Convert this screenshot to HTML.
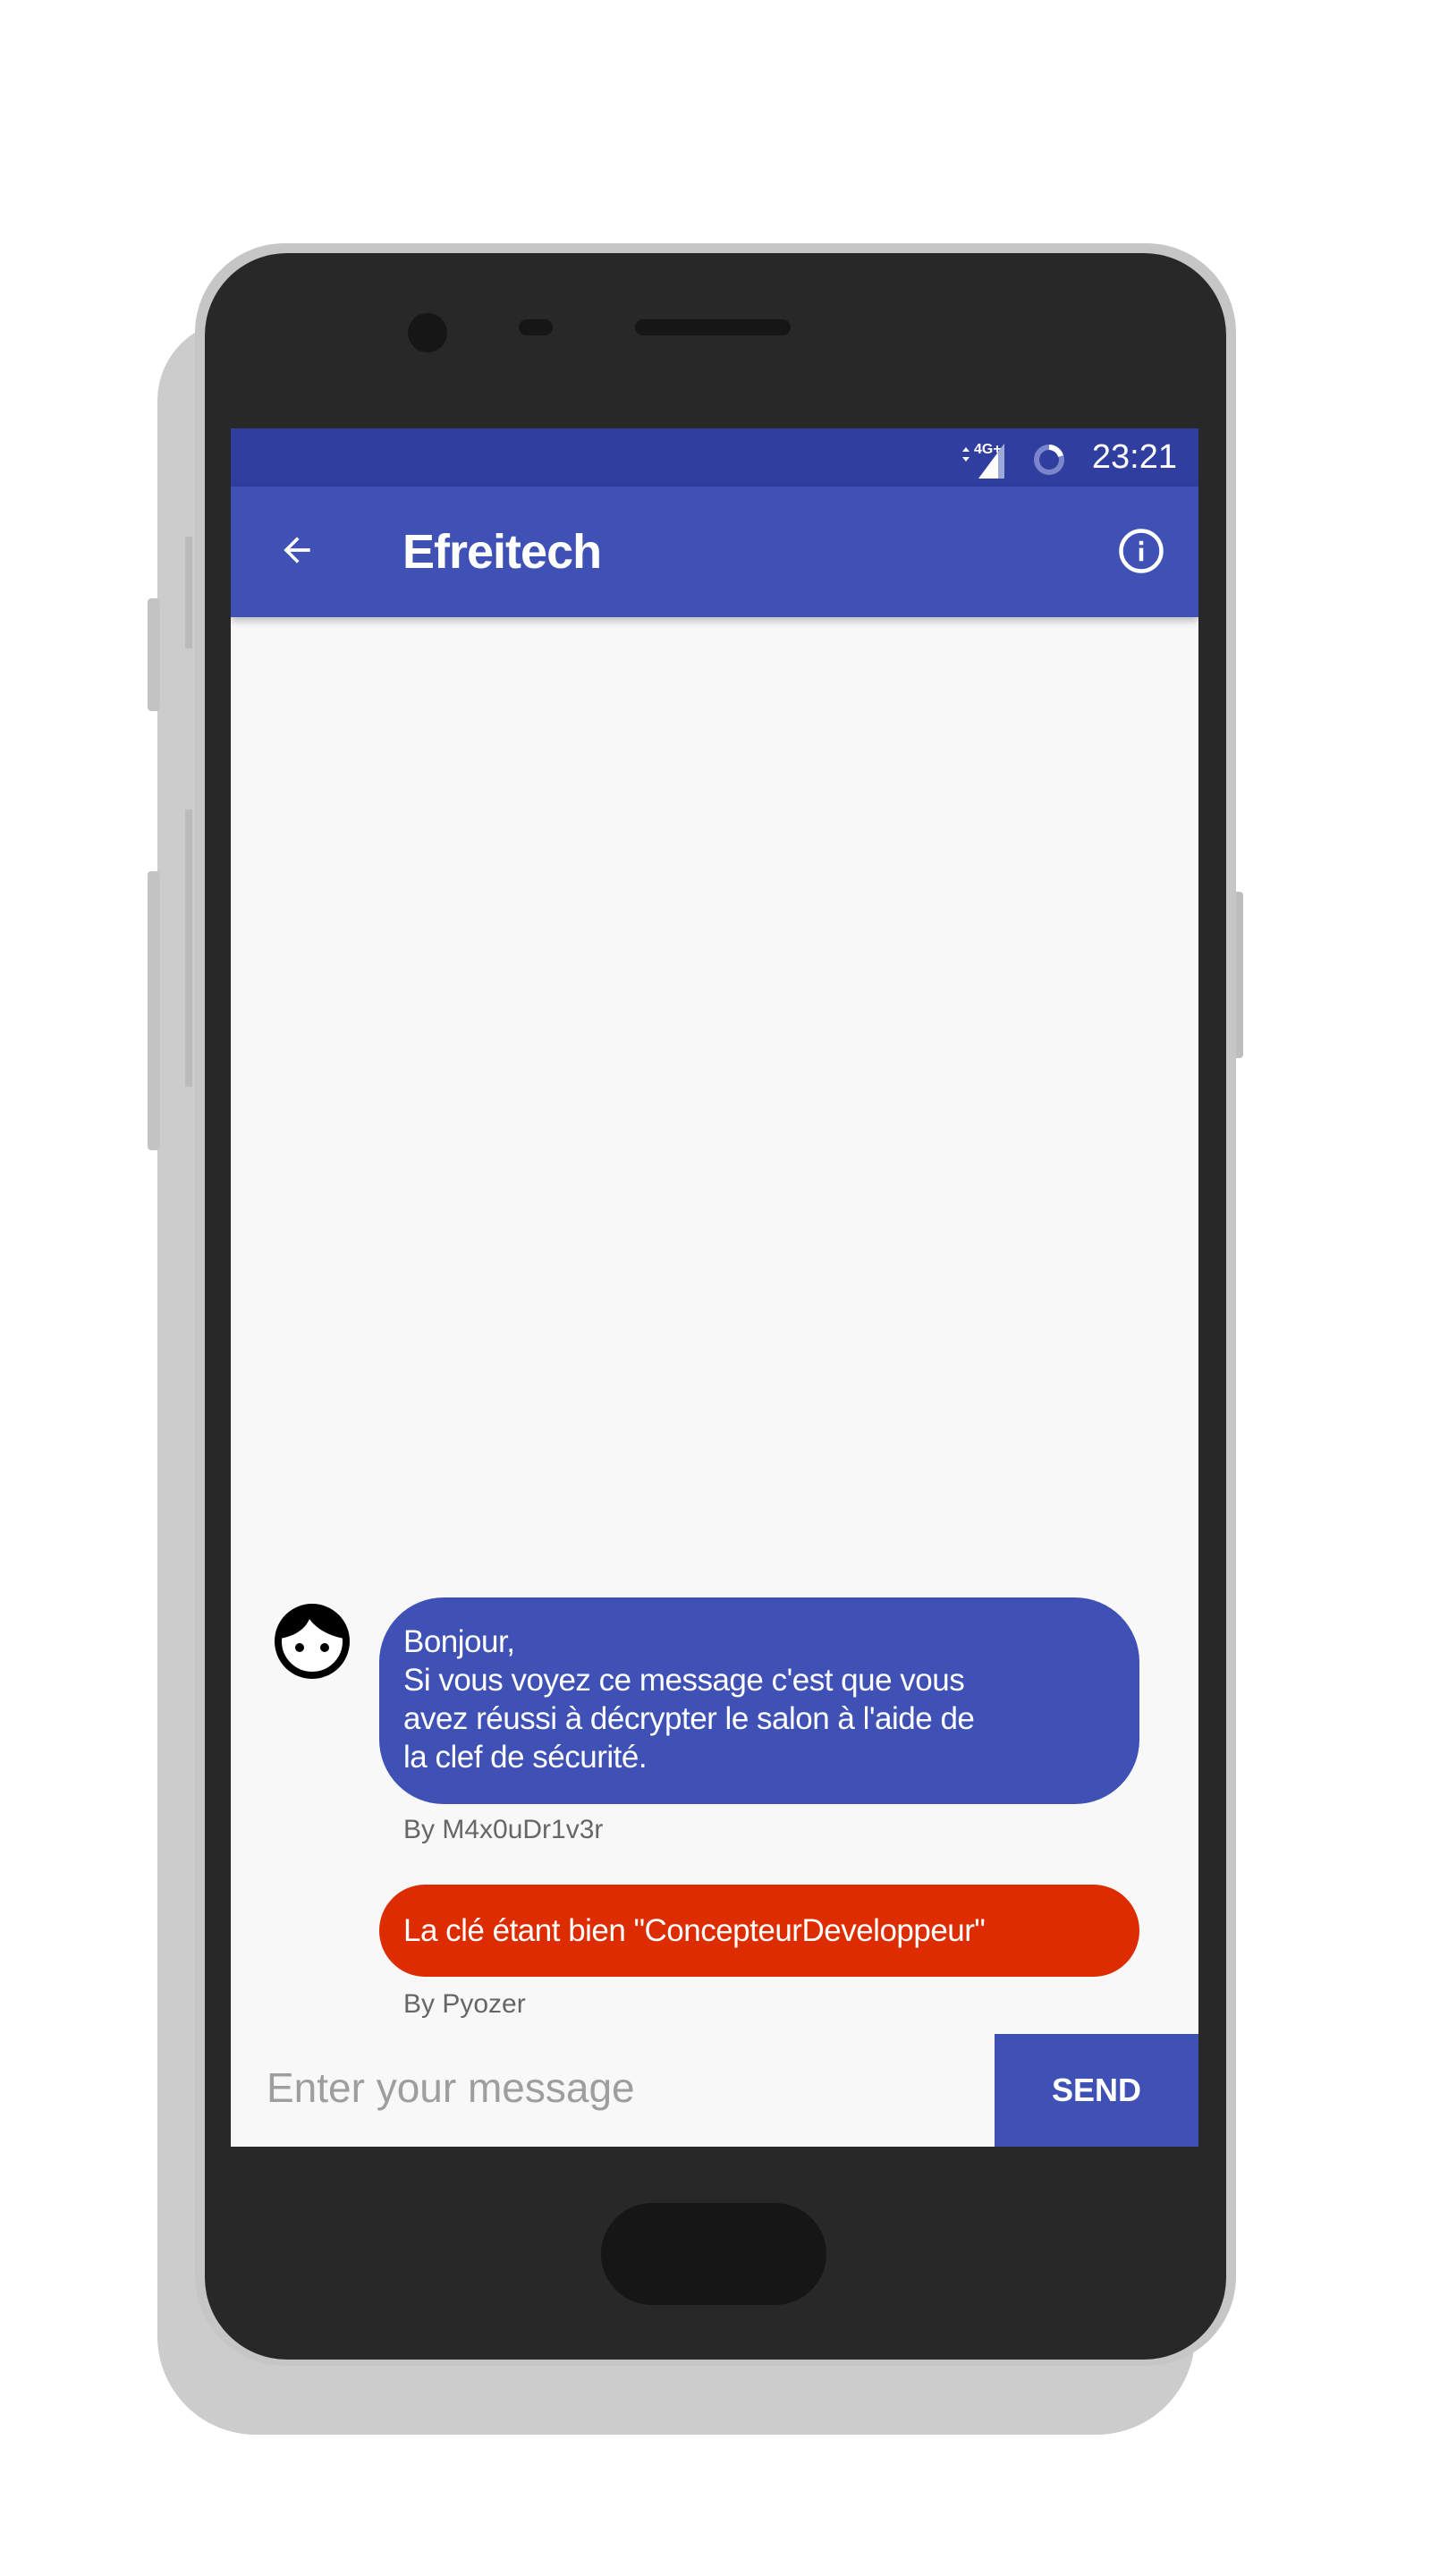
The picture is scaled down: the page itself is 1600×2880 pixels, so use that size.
<!DOCTYPE html>
<html><head><meta charset="utf-8"><style>
*{margin:0;padding:0;box-sizing:border-box}
body{width:1600px;height:2880px;background:#fff;position:relative;overflow:hidden;font-family:"Liberation Sans",sans-serif}
.a{position:absolute}
</style></head><body>
<div class="a" style="left:176px;top:358px;width:1160px;height:2364px;background:#cccccc;border-radius:90px 60px 110px 110px"></div>
<div class="a" style="left:165px;top:669px;width:14px;height:126px;background:#c4c4c4;border-radius:4px"></div>
<div class="a" style="left:165px;top:974px;width:14px;height:312px;background:#c4c4c4;border-radius:4px"></div>
<div class="a" style="left:1374px;top:997px;width:16px;height:186px;background:#bdbdbd;border-radius:4px"></div>
<div class="a" style="left:218px;top:272px;width:1164px;height:2373px;background:#c6c6c6;border-radius:100px"></div>
<div class="a" style="left:229px;top:283px;width:1142px;height:2355px;background:#282828;border-radius:92px"></div>
<div class="a" style="left:207px;top:600px;width:8px;height:125px;background:#bbb"></div>
<div class="a" style="left:207px;top:905px;width:8px;height:310px;background:#bbb"></div>
<div class="a" style="left:456px;top:350px;width:44px;height:44px;background:#161616;border-radius:50%"></div>
<div class="a" style="left:580px;top:357px;width:38px;height:18px;background:#161616;border-radius:9px"></div>
<div class="a" style="left:710px;top:357px;width:174px;height:18px;background:#161616;border-radius:9px"></div>
<div class="a" style="left:672px;top:2463px;width:252px;height:114px;background:#161616;border-radius:57px"></div>
<div class="a" style="left:258px;top:479px;width:1082px;height:1921px;background:#f8f8f8;overflow:hidden">
  <div class="a" style="left:0;top:0;width:1082px;height:65px;background:#303f9f"></div>
  <div class="a" style="right:24px;top:9px;color:#fff;font-size:38px;line-height:46px">23:21</div>
  <svg class="a" style="left:815px;top:6px" width="160" height="54" viewBox="0 0 160 54">
    <path d="M3 20l4-5 4 5zM3 26l4 5 4-5z" fill="#fff"/>
    <text x="16" y="22" fill="#fff" font-size="16" font-weight="bold" font-family="Liberation Sans">4G+</text>
    <path d="M50 11V50H21z" fill="#fff"/>
    <path d="M50 11V50H43V20z" fill="#9fa8da"/>
    <circle cx="100" cy="29" r="14" fill="none" stroke="#7986cb" stroke-width="6"/>
    <path d="M100 15a14 14 0 0 1 13 10" fill="none" stroke="#fff" stroke-width="6"/>
  </svg>
  <div class="a" style="left:0;top:65px;width:1082px;height:146px;background:#3f51b5;box-shadow:0 4px 8px rgba(0,0,0,.25)"></div>
  <svg class="a" style="left:52px;top:114px" width="44" height="44" viewBox="0 0 24 24"><path d="M20 11H7.8l5.6-5.6L12 4l-8 8 8 8 1.4-1.4L7.8 13H20z" fill="#fff"/></svg>
  <div class="a" style="left:192px;top:106px;color:#fff;font-size:54px;font-weight:bold;line-height:64px;letter-spacing:-1px">Efreitech</div>
  <svg class="a" style="left:991px;top:110px" width="54" height="54" viewBox="0 0 24 24"><circle cx="12" cy="12" r="10" fill="none" stroke="#fff" stroke-width="2"/><path d="M11 10.5h2V17h-2zM11 7h2v2h-2z" fill="#fff"/></svg>
  <svg class="a" style="left:48px;top:1313px" width="86" height="86" viewBox="0 0 86 86">
    <circle cx="43" cy="43" r="38" fill="#fff" stroke="#000" stroke-width="8"/>
    <path d="M6 40C8 18 25 6 43 6s35 12 37 34C65 38 48 30 40 18 35 30 22 38 6 40z" fill="#000"/>
    <circle cx="29" cy="50" r="5" fill="#000"/><circle cx="57" cy="50" r="5" fill="#000"/>
  </svg>
  <div class="a" style="left:166px;top:1307px;width:850px;height:231px;background:#3f51b5;border-radius:72px"></div>
  <div class="a" style="left:193px;top:1335px;color:#fff;font-size:35px;line-height:43px;letter-spacing:-0.5px">Bonjour,<br>Si vous voyez ce message c'est que vous<br>avez réussi à décrypter le salon à l'aide de<br>la clef de sécurité.</div>
  <div class="a" style="left:193px;top:1548px;color:#666;font-size:30px;line-height:38px">By M4x0uDr1v3r</div>
  <div class="a" style="left:166px;top:1628px;width:850px;height:103px;background:#dd2c00;border-radius:52px"></div>
  <div class="a" style="left:193px;top:1658px;color:#fff;font-size:35px;line-height:43px;letter-spacing:-0.5px">La clé étant bien "ConcepteurDeveloppeur"</div>
  <div class="a" style="left:193px;top:1743px;color:#666;font-size:30px;line-height:38px">By Pyozer</div>
  <div class="a" style="left:40px;top:1827px;color:#9e9e9e;font-size:46px;line-height:56px">Enter your message</div>
  <div class="a" style="left:854px;top:1795px;width:228px;height:126px;background:#3f51b5;color:#fff;font-size:36px;font-weight:bold;display:flex;align-items:center;justify-content:center">SEND</div>
</div>
</body></html>
